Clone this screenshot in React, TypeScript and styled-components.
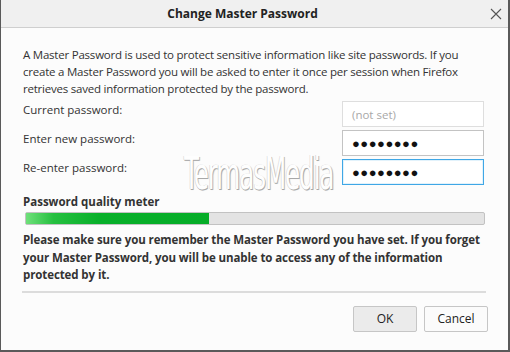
import React from 'react';
import styled, { createGlobalStyle } from 'styled-components';

const GlobalStyle = createGlobalStyle`
  html, body {
    margin: 0;
    padding: 0;
    background: #fcfcfc;
  }
  * {
    box-sizing: border-box;
  }
`;

const Window = styled.div`
  position: relative;
  width: 510px;
  height: 352px;
  display: flex;
  flex-direction: column;
  background: #fcfcfc;
  border-left: 1px solid #5a5a5a;
  border-right: 2px solid #5a5a5a;
  border-bottom: 2px solid #5a5a5a;
  font-family: 'Open Sans', 'Noto Sans', sans-serif;
  font-size: 11.5px;
  color: #333;
`;

const TitleBar = styled.div`
  height: 28px;
  flex: none;
  display: flex;
  align-items: center;
  justify-content: center;
  position: relative;
  background: #f0f0f0;
  border-bottom: 1px solid #cfcfcf;
`;

const Title = styled.div`
  font-weight: 700;
  font-size: 12px;
  color: #222;
  margin-left: -24px;
`;

const CloseButton = styled.div`
  position: absolute;
  right: 6px;
  top: 8px;
  width: 12px;
  height: 12px;
  display: flex;
`;

const Body = styled.div`
  flex: 1;
  display: flex;
  flex-direction: column;
  padding: 18px 22px 0 22px;
`;

const Intro = styled.p`
  margin: 0;
  line-height: 17px;
  letter-spacing: -0.22px;
`;

const Form = styled.div`
  display: grid;
  grid-template-columns: 1fr 142px;
  grid-auto-rows: 26px;
  row-gap: 3px;
  margin-top: 4px;
  margin-right: 2px;
`;

const Label = styled.label`
  line-height: 18px;
`;

const Field = styled.div<{ $focused?: boolean; $disabled?: boolean }>`
  border: 1px solid ${p => (p.$focused ? '#3fa7e6' : p.$disabled ? '#dedede' : '#c3c3c3')};
  background: #fff;
  display: flex;
  align-items: center;
  padding-left: 9px;
  color: ${p => (p.$disabled ? '#a8a8a8' : '#111')};
  font-size: ${p => (p.$disabled ? '11.5px' : '13px')};
  letter-spacing: ${p => (p.$disabled ? '0' : '0.5px')};
  box-shadow: ${p => (p.$focused ? 'inset 0 0 0 1px rgba(63,167,230,0.15)' : 'none')};
`;

const MeterLabel = styled.div`
  font-weight: 700;
  margin-top: 9px;
  line-height: 16px;
`;

const Meter = styled.div`
  height: 13px;
  margin: 2px 1px 0 2px;
  border: 1px solid #c2c2c2;
  background: #e3e3e3;
  border-radius: 2px;
  display: flex;
`;

const MeterFill = styled.div`
  height: 100%;
  background: linear-gradient(90deg, #6fe07a 0%, #26c040 15%, #08b02a 40%, #06ad28 100%);
`;

const Warning = styled.p`
  margin: 6px 0 0 0;
  font-weight: 700;
  line-height: 17.5px;
  letter-spacing: -0.1px;
`;

const Separator = styled.div`
  height: 2px;
  background: #dcdcdc;
  margin-top: 7px;
  margin-left: -1px;
`;

const Footer = styled.div`
  display: flex;
  justify-content: flex-end;
  gap: 7px;
  margin-top: 13px;
  margin-right: -2px;
`;

const Button = styled.button<{ $default?: boolean }>`
  width: 64px;
  height: 26px;
  font-family: inherit;
  font-size: 12px;
  color: #222;
  border: 1px solid #c6c6c6;
  background: ${p => (p.$default ? '#ebebeb' : '#fbfbfb')};
  border-radius: 2px;
  padding: 0;
`;

const Watermark = styled.div`
  position: absolute;
  left: 183px;
  top: 150px;
  font-family: 'DejaVu Sans', sans-serif;
  font-size: 44px;
  line-height: 48px;
  color: #fefefe;
  letter-spacing: -2px;
  transform: scaleX(0.56);
  transform-origin: left top;
  text-shadow: 1px 1px 0 #a8a8a8, 2px 1px 1px #cfcfcf, -1px 0 0 #d6d6d6;
  pointer-events: none;
`;

const CloseIcon = () => (
  <svg width="12" height="12" viewBox="0 0 12 12">
    <path d="M1 1 L11 11 M11 1 L1 11" stroke="#555" strokeWidth="1.1" fill="none" />
  </svg>
);

const App: React.FC = () => {
  const strength = 40;

  return (
    <>
      <GlobalStyle />
      <Window>
        <TitleBar>
          <Title>Change Master Password</Title>
          <CloseButton>
            <CloseIcon />
          </CloseButton>
        </TitleBar>
        <Body>
          <Intro>
            A Master Password is used to protect sensitive information like site passwords. If you
            create a Master Password you will be asked to enter it once per session when Firefox
            retrieves saved information protected by the password.
          </Intro>
          <Form>
            <Label>Current password:</Label>
            <Field $disabled>(not set)</Field>
            <Label>Enter new password:</Label>
            <Field>●●●●●●●●</Field>
            <Label>Re-enter password:</Label>
            <Field $focused>●●●●●●●●</Field>
          </Form>
          <MeterLabel>Password quality meter</MeterLabel>
          <Meter>
            <MeterFill style={{ width: `${strength}%` }} />
          </Meter>
          <Warning>
            Please make sure you remember the Master Password you have set. If you forget
            your Master Password, you will be unable to access any of the information
            protected by it.
          </Warning>
          <Separator />
          <Footer>
            <Button $default>OK</Button>
            <Button>Cancel</Button>
          </Footer>
        </Body>
        <Watermark>TermasMedia</Watermark>
      </Window>
    </>
  );
};

export default App;
